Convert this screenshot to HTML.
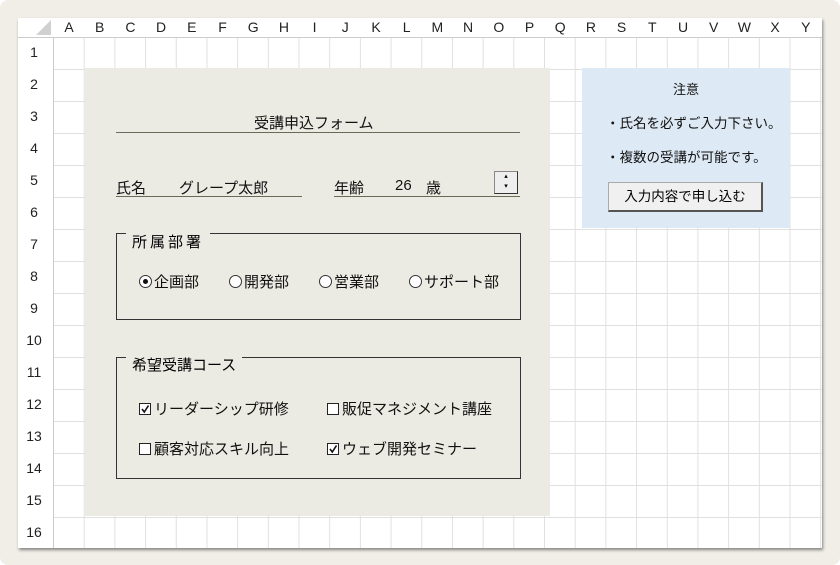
<!DOCTYPE html><html><head><meta charset="utf-8"><style>
body{margin:0;width:840px;height:565px;background:#fff;font-family:"Liberation Sans","Noto Sans CJK JP",sans-serif;position:relative;overflow:hidden}
.outer{position:absolute;left:0;top:0;width:840px;height:565px;background:#f1eee8;border-radius:8px}
.sheet{position:absolute;left:18px;top:18px;width:804px;height:530px;background:#fff;box-shadow:1px 2px 3px rgba(0,0,0,.45)}
.grid{position:absolute;left:53px;top:37px;width:769px;height:511px;background-image:linear-gradient(to right,#e0e0e0 1px,transparent 1px),linear-gradient(to bottom,#e0e0e0 1px,transparent 1px);background-size:30.7px 32px}
.t{position:absolute;font-size:15px;color:#111;white-space:nowrap}
.col{position:absolute;top:19px;font-size:14px;color:#222;width:30px;text-align:center}
.row{position:absolute;left:18px;width:32px;text-align:center;font-size:14px;color:#222}
.ln{position:absolute;height:1px;background:#6a6a5a}
.box{position:absolute;border:1px solid #333}
.lbl{position:absolute;background:#ecebe3;padding:0 6px;font-size:15px}
.rd{display:inline-block;width:11px;height:11px;border:1px solid #333;border-radius:50%;background:#fff;vertical-align:-1px;margin-right:2px;position:relative}
.rd.on::after{content:"";position:absolute;left:3px;top:3px;width:5px;height:5px;border-radius:50%;background:#111}
.cb{display:inline-block;width:10px;height:10px;border:1px solid #222;background:#fff;vertical-align:-1px;margin-right:3px;position:relative}
.cb svg{position:absolute;left:0;top:0}
</style></head><body>
<div class="outer"></div>
<div class="sheet"></div>
<div class="grid"></div>
<div style="position:absolute;left:18px;top:37px;width:35px;height:511px;border-right:1px solid #ccc"></div>
<div style="position:absolute;left:18px;top:18px;width:804px;height:19px;border-bottom:1px solid #ccc"></div>
<div style="position:absolute;left:36px;top:20px;width:0;height:0;border-left:15px solid transparent;border-bottom:15px solid #d0d0d0"></div>
<div id="cols"></div>
<div style="position:absolute;left:85px;top:68px;width:465px;height:448px;background:#ecebe3"></div>
<div style="position:absolute;left:582px;top:68px;width:208px;height:160px;background:#dde9f4"></div>
<div class="t" style="left:254px;top:112px;font-size:15px">受講申込フォーム</div>
<div class="ln" style="left:116px;top:132px;width:404px"></div>
<div class="t" style="left:116px;top:177px">氏名</div>
<div class="t" style="left:179px;top:177px">グレープ太郎</div>
<div class="ln" style="left:116px;top:196px;width:186px"></div>
<div class="t" style="left:334px;top:177px">年齢</div>
<div class="t" style="left:395px;top:177px">26</div>
<div class="t" style="left:426px;top:177px">歳</div>
<div class="ln" style="left:334px;top:196px;width:186px"></div>
<div style="position:absolute;left:494px;top:171px;width:22px;height:21px;border:1px solid #888;border-right-color:#333;border-bottom-color:#333;background:#eee;font-size:7px;line-height:10px;text-align:center">▴<br>▾</div>
<div class="box" style="left:116px;top:233px;width:403px;height:85px"></div>
<div class="lbl" style="left:126px;top:231px;letter-spacing:3px">所属部署</div>
<div class="t" style="left:139px;top:271px"><span class="rd on"></span>企画部</div>
<div class="t" style="left:229px;top:271px"><span class="rd"></span>開発部</div>
<div class="t" style="left:319px;top:271px"><span class="rd"></span>営業部</div>
<div class="t" style="left:409px;top:271px"><span class="rd"></span>サポート部</div>
<div class="box" style="left:116px;top:357px;width:403px;height:120px"></div>
<div class="lbl" style="left:126px;top:354px">希望受講コース</div>
<div class="t" style="left:139px;top:398px"><span class="cb"><svg width="10" height="10"><path d="M2 5 L4.3 8 L8.5 1.5" fill="none" stroke="#111" stroke-width="1.6"/></svg></span>リーダーシップ研修</div>
<div class="t" style="left:327px;top:398px"><span class="cb"></span>販促マネジメント講座</div>
<div class="t" style="left:139px;top:438px"><span class="cb"></span>顧客対応スキル向上</div>
<div class="t" style="left:327px;top:438px"><span class="cb"><svg width="10" height="10"><path d="M2 5 L4.3 8 L8.5 1.5" fill="none" stroke="#111" stroke-width="1.6"/></svg></span>ウェブ開発セミナー</div>
<div class="t" style="left:673px;top:79px;font-size:13px">注意</div>
<div class="t" style="left:606px;top:112px;font-size:13.5px">・氏名を必ずご入力下さい。</div>
<div class="t" style="left:606px;top:146px;font-size:13.5px">・複数の受講が可能です。</div>
<div style="position:absolute;left:608px;top:182px;width:152px;height:27px;background:#f0f0f0;border:1px solid #aaa;border-right:2px solid #555;border-bottom:2px solid #555;font-size:13.5px;text-align:center;line-height:27px">入力内容で申し込む</div>
<script>
var L="ABCDEFGHIJKLMNOPQRSTUVWXY",h="";
for(var i=0;i<25;i++)h+='<div class="col" style="left:'+(54+i*30.7)+'px">'+L[i]+'</div>';
for(var r=0;r<16;r++)h+='<div class="row" style="top:'+(44+r*32)+'px">'+(r+1)+'</div>';
document.getElementById('cols').innerHTML=h;
</script>
</body></html>
